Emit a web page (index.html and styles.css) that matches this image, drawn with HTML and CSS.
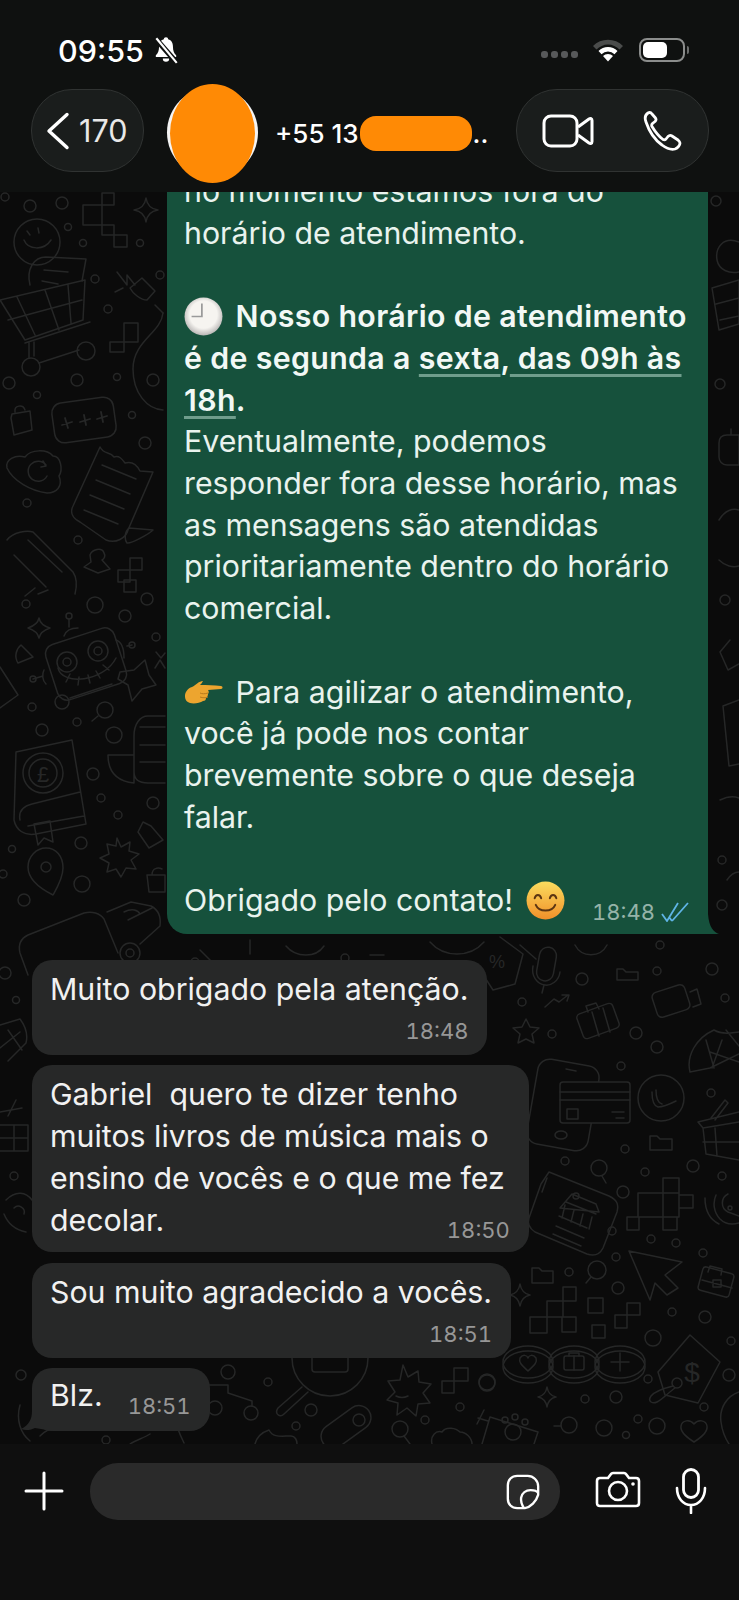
FILE: index.html
```html
<!DOCTYPE html>
<html lang="pt-BR">
<head>
  <meta charset="UTF-8" />
  <title>Conversa</title>
  <link rel="stylesheet" href="styles.css">
</head>
<body>
<div class="phone">

  <header class="topbar">
    <div class="status">
      <div class="status-left">
        <span class="clock">09:55</span>
        <svg class="bell" width="26" height="30" viewBox="0 0 24 28"><path d="M12 2c-1.300 0-2 .9-2 1.900C6.800 4.800 5.500 7.500 5.500 11c0 4-1 6-3 8v1.500h19V19c-2-2-3-4-3-8 0-3.500-1.300-6.200-4.500-7.100C14 2.900 13.300 2 12 2zM9 22a3 3 0 0 0 6 0z" fill="#fff"/><path d="M2 3l20 23" stroke="#0f1110" stroke-width="5"/><path d="M3 3l19 23" stroke="#fff" stroke-width="2"/></svg>
      </div>
      <div class="status-right">
        <div class="signal"><i></i><i></i><i></i><i></i></div>
        <svg width="32" height="24" viewBox="0 0 32 24"><path d="M1 8a21 21 0 0 1 30 0l-3.500 3.500a16 16 0 0 0-23 0z" fill="#4a4c4b"/><path d="M6.500 13a13.500 13.500 0 0 1 19 0l-3 3.200a9 9 0 0 0-13 0z" fill="#fff"/><path d="M11 18a7 7 0 0 1 10 0l-5 5.500z" fill="#fff"/></svg>
        <div class="battery"><div class="battery-fill"></div></div>
        <div class="battery-tip"></div>
      </div>
    </div>
    <div class="nav">
      <div class="pill back-pill">
        <svg width="24" height="38" viewBox="0 0 24 38"><path d="M21 2.500L3 19l18 16.500" fill="none" stroke="#fff" stroke-width="3.400" stroke-linecap="round" stroke-linejoin="round"/></svg>
        <span>170</span>
      </div>
      <div class="avatar"></div>
      <div class="contact">
        <span>+55 13</span>
        <span class="redact"></span>
        <span class="dots">..</span>
      </div>
      <div class="pill call-pill">
        <svg width="52" height="36" viewBox="0 0 52 36"><rect x="2" y="3" width="33" height="30" rx="7" fill="none" stroke="#fff" stroke-width="3"/><path d="M36 14l11-8c1.500-1 3-.5 3 1.500v21c0 2-1.500 2.500-3 1.500l-11-8" fill="none" stroke="#fff" stroke-width="3" stroke-linejoin="round"/></svg>
        <svg width="40" height="42" viewBox="0 0 40 42"><path d="M5 3c-3 2-3.500 5-2 9 3 9 9 18 16 23 4 3 9 5 13 4 3-1 5-4 5-6 0-1-1-2-2-3l-6-4c-1.500-1-3-.5-4 .5l-2 2.500c-1 1-2 1-3 .5-4-3-8-8-11-13-.5-1-.5-2 .5-3l2.500-2c1-1 1.500-2 .5-3.500L9 4C8 2.500 6.500 2 5 3z" fill="none" stroke="#fff" stroke-width="2.800" stroke-linejoin="round"/></svg>
      </div>
    </div>
  </header>

  <main class="chat">
    <svg class="doodles" width="739" height="1252" viewBox="0 192 739 1252" fill="none" stroke="#262727" stroke-width="1.500" stroke-linejoin="round" stroke-linecap="round">
      <!-- left column, top -->
      <circle cx="5" cy="197" r="4"/><circle cx="30" cy="206" r="6"/><circle cx="62" cy="203" r="6"/><circle cx="68" cy="227" r="3.500"/><circle cx="83" cy="243" r="3.500"/><circle cx="140" cy="243" r="3.500"/>
      <path d="M83 205h19v20H83zM102 193h12v12h-12zM102 225h12v10h-12zM114 235h13v12h-13z"/>
      <path d="M146 198c1 7 5 11 12 12c-7 1-11 5-12 12c-1-7-5-11-12-12c7-1 11-5 12-12z"/>
      <circle cx="37" cy="242" r="23"/><path d="M24 240c4 10 20 11 27 0M27 231l3 4M38 228l1 5"/>
      <path d="M30 285c-4-16 4-28 16-28l40 2-4 22M44 270l24 2M42 281l16 3"/>
      <path d="M0 300l85-20-2 40-58 20zM17 297l18 38M45 290l14 40M68 285l3 38M8 320l74-20M90 322l-65 21M29 343v15M34 342v14M39 363l40-13"/>
      <circle cx="31" cy="367" r="9"/><circle cx="86" cy="351" r="9"/>
      <path d="M117 272l10 13 0-10 8 10M115 292l8-4M130 288l12-10 13 13-8 9c-6 0-14-6-17-12zM155 305l8 8"/>
      <circle cx="95" cy="279" r="4"/><circle cx="108" cy="309" r="4"/><circle cx="160" cy="275" r="4"/>
      <path d="M124 323h14v19h-14zM110 342h14v10h-14z"/>
      <path d="M163 313c-2 20-30 28-30 56c0 24 14 40 30 41"/><circle cx="153" cy="380" r="6"/>
      <circle cx="9" cy="383" r="6"/><circle cx="77" cy="380" r="6"/><circle cx="37" cy="395" r="3.500"/><circle cx="117" cy="377" r="3.500"/><circle cx="132" cy="415" r="3.500"/><circle cx="145" cy="443" r="6"/>
      <path d="M12 414l18-3 2 19-18 5-3-17zM15 412c-1-7 8-8 10-2"/>
      <rect x="53" y="400" width="62" height="40" rx="10" transform="rotate(-8 84 420)"/>
      <path d="M62 425l10-3M65 418l3 10M80 422l10-3M84 415l2 10M97 419l10-3M101 412l2 10" stroke-width="1.800"/>
      <path d="M7 468c-2-8 8-14 18-11c6-8 22-8 28-1c8 0 10 14 6 20c4 10-2 17-12 17c-16-2-34-12-40-25z"/><path d="M46 465a10 10 0 1 0 1 11M43 461l3 5-5 1"/>
      <path d="M100 447c4 8 10 4 14 10c5-2 8 2 11 6c7-2 12 2 15 8l13 1-25 58c-2 8-12 14-22 10L80 522c-8-4-10-10-7-16z"/><path d="M153 530c-4 4-22 14-26 13c-3-4-2-12 2-15zM102 465l34 14M96 480l34 14M90 495l34 14M84 510l34 14"/>
      <circle cx="27" cy="503" r="4"/><circle cx="78" cy="540" r="4"/>
      <path d="M7 540c6-8 20-10 26-8l40 40c4 6 4 14 2 22M14 555l32 32M28 540l34 32"/>
      <path d="M90 555c2-6 12-8 14-2c2 3 0 6-2 7l8 9-12 4-14-6 7-5z"/>
      <path d="M130 558h12v12h-12zM118 570h12v12h-12z"/>
      <!-- left column, middle -->
      <path d="M35 588l-10 8M48 590l-10 4"/><circle cx="26" cy="604" r="4"/><circle cx="95" cy="605" r="8"/><circle cx="125" cy="616" r="6"/><circle cx="147" cy="599" r="6"/><circle cx="156" cy="637" r="4"/><path d="M124 580h12v12h-12z"/>
      <path d="M39 618c1 5 4 8 11 10c-6 2-10 5-11 10c-1-5-5-8-11-10c6-2 10-5 11-10z"/>
      <path d="M21 645l12 12-15 6c-4-6-2-14 3-18z"/>
      <rect x="50" y="635" width="72" height="58" rx="10" transform="rotate(-18 86 664)"/>
      <circle cx="67" cy="662" r="10"/><circle cx="67" cy="662" r="4"/><circle cx="98" cy="651" r="10"/><circle cx="98" cy="651" r="4"/>
      <path d="M58 668c4 18 46 14 58-10M66 682l4-8M78 685l1-8M90 683l-2-8M100 678l-4-7M109 670l-6-5"/>
      <circle cx="69" cy="616" r="3"/><path d="M69 619v8M64 636c2-6 8-8 14-8M116 640c6 2 8 10 8 18M127 646l5-1"/><circle cx="132" cy="645" r="3"/><path d="M44 670c-2 4-2 10 2 14M33 679l10-3"/><circle cx="33" cy="679" r="3"/>
      <circle cx="62" cy="702" r="7"/><path d="M70 698l42-14"/>
      <path d="M120 672l14-2 11-10 4 15 7 10-14 4-10 12-4-16-10-6z"/>
      <path d="M156 652l5 6 4-5M155 668l5-8 5 8"/>
      <path d="M0 667l18 28-18 13"/>
      <circle cx="32" cy="707" r="4"/><circle cx="42" cy="730" r="6"/><circle cx="77" cy="722" r="4"/><circle cx="105" cy="710" r="8"/><path d="M98 716l-6 5"/><circle cx="114" cy="735" r="8"/>
      <path d="M165 716h-17c-8 0-14 8-14 20v36c0 8 6 11 14 11h17M108 755h26v28M108 755c0 14 6 26 26 28M140 727h25M140 745h25M140 762h25"/>
      <path d="M16 752l56-12 14 84-50 10c-12 2-20-4-22-14zM20 820c-2-10 4-14 12-16l48-12M28 826l56-10"/><path d="M34 824l16-3 3 21-9-4-6 7z"/>
      <circle cx="43" cy="773" r="20"/><circle cx="43" cy="773" r="14"/><text x="43" y="782" font-family="Liberation Sans" font-size="22" text-anchor="middle" fill="#262727" stroke="none">£</text>
      <circle cx="93" cy="774" r="6"/><circle cx="101" cy="798" r="4"/><circle cx="118" cy="815" r="4"/><circle cx="153" cy="803" r="6"/><circle cx="81" cy="843" r="6"/><circle cx="12" cy="849" r="3.500"/><circle cx="3" cy="874" r="4"/><circle cx="24" cy="900" r="6"/><circle cx="82" cy="884" r="8"/>
      <path d="M46 848c10 0 17 8 17 20c0 10-6 20-10 27c-8-4-25-14-25-28c0-10 8-19 18-19z"/><circle cx="46" cy="867" r="5"/>
      <path d="M117 838l4 9 9-5-1 9 10 3-8 6 5 9-10-1-5 9-5-8-9 3 2-9-9-5 9-4-2-10 9 2z"/>
      <path d="M138 832l5-10 8 4 12 14-14 8z"/><path d="M147 875h18v17h-16zM152 875c0-7 6-8 10-6"/>
      <path d="M28 935l56-22c8-2 16 0 20 6l14 34M28 935c-8 4-10 10-8 18l8 22"/>
      <path d="M107 912l24-10 20 4c8 4 10 12 9 20l-20 18M124 912c8-4 14-2 16 2M128 920l24-12"/><circle cx="130" cy="953" r="10"/><circle cx="130" cy="953" r="4"/>
      <circle cx="5" cy="973" r="6"/><circle cx="16" cy="1000" r="3.500"/>
      <path d="M0 1025l20-6c6 8 8 16 6 24l-18 18M8 1030l14 20M0 1048l20-16"/>
      <path d="M0 1112l22-4M16 1100l-8 16M0 1125h28v26H0M14 1125v26M0 1138h28"/><circle cx="14" cy="1176" r="4"/>
      <path d="M6 1200c10-10 20-8 26 0M4 1214c4 10 12 16 22 18M14 1208a6 6 0 0 1 10 6"/>
      <!-- above the first received message -->
      <path d="M200 950l18 18M250 940v14M286 946c10 12 30 12 38 0M370 955h14M430 942c14 16 40 16 54 0M520 945l16 14M575 945a18 18 0 0 0 32 0"/><circle cx="195" cy="962" r="4"/><circle cx="345" cy="958" r="4"/><circle cx="660" cy="945" r="4"/>
      <!-- right edge beside the green bubble -->
      <circle cx="716" cy="201" r="5"/><path d="M739 242c-16-6-24 6-22 18c2 10 12 14 22 12"/><path d="M712 288l27-8v44l-20 6zM716 304l23-6M720 320l19-4"/>
      <circle cx="720" cy="384" r="5"/><path d="M727 435h12v30h-12c-5 0-8-4-8-8v-14c0-5 3-8 8-8zM731 435v-6"/>
      <path d="M719 520c6-10 14-12 20-10M719 560c6 6 14 8 20 6M730 640l-10 12 8 18 11-6"/><circle cx="725" cy="600" r="5"/>
      <path d="M739 700l-16 6 6 60 10-2M720 800c8-4 14-4 19-2"/><circle cx="722" cy="860" r="4"/><path d="M727 880c4-6 8-8 12-8"/><circle cx="722" cy="905" r="5"/>
      <!-- right of the received messages -->
      <path d="M500 937l23 17-8 30-22 6-13-20"/><text x="497" y="968" font-family="Liberation Sans" font-size="18" text-anchor="middle" fill="#262727" stroke="none">%</text>
      <rect x="538" y="947" width="17" height="34" rx="8.500" transform="rotate(10 546 964)"/><path d="M533 966c-2 10 4 18 12 19 6 1 14-4 15-13M544 985l-2 8"/>
      <circle cx="582" cy="979" r="6"/><circle cx="522" cy="1002" r="4"/><path d="M617 969h6l3 3h12v8h-21z"/><circle cx="657" cy="971" r="4"/><circle cx="712" cy="969" r="6"/>
      <rect x="654" y="988" width="34" height="26" rx="5" transform="rotate(-18 671 1001)"/><path d="M690 992l7-3 4 15-8 3"/><circle cx="725" cy="998" r="4"/>
      <path d="M545 1007l9-8 5 3 9-7M562 995h7l-2 6"/>
      <path d="M526 1019l4 8 9 1-7 6 2 9-8-4-8 4 2-9-7-6 9-1z"/><circle cx="552" cy="1034" r="4"/>
      <rect x="579" y="1008" width="38" height="26" rx="4" transform="rotate(-20 598 1021)"/><path d="M588 1012l-2-6 10-3 3 6M592 1012l7 24M603 1008l7 24"/>
      <circle cx="636" cy="1033" r="6"/><circle cx="657" cy="1047" r="6"/>
      <path d="M690 1072c-4-16 6-34 24-42c10 6 20 2 25 2M690 1072l20-4 29-14M706 1040l8 28M722 1040l-10 28M710 1052l29 10M726 1030l13 16"/>
      <rect x="532" y="1062" width="62" height="86" rx="12" transform="rotate(10 563 1105)"/><path d="M566 1069l10 2"/><ellipse cx="561" cy="1135" rx="6" ry="4"/>
      <rect x="560" y="1082" width="70" height="41" rx="3" fill="#0b0b0b"/><path d="M560 1092h70M560 1100h70M567 1109h11v10h-11zM612 1112h12M616 1118h8"/>
      <circle cx="661" cy="1098" r="23"/><path d="M652 1092c0 8 2 14 6 15 6 0 12-3 18-6M656 1090c0 8 2 13 6 14"/>
      <circle cx="621" cy="1066" r="4"/><circle cx="711" cy="1093" r="4"/>
      <path d="M698 1122l41-10M703 1128l3 26 33 6M698 1122l5 6 36-6M715 1128l2 28M703 1142h36M711 1118l14-18 3 3-13 17"/>
      <path d="M650 1136h7l3 3h12v11h-22z"/><circle cx="625" cy="1149" r="4"/><circle cx="565" cy="1161" r="4"/>
      <circle cx="599" cy="1168" r="8"/><path d="M602 1176l4 7"/><circle cx="645" cy="1172" r="4"/><circle cx="693" cy="1166" r="6"/><circle cx="722" cy="1176" r="4"/>
      <path d="M549 1172l60 24c8 4 10 8 8 16l-14 36c-4 8-10 8-16 6l-52-22c-6-4-8-8-6-14l12-34z"/><path d="M547 1178l-5 14"/>
      <path d="M556 1226l28 12M553 1234l28 12M559 1216l28 12M566 1202l30 12M560 1208l12-14 24 10 3 8zM565 1205l-3 13M574 1210l-3 12M583 1214l-3 12M592 1217l-3 12"/><circle cx="576" cy="1196" r="3"/>
      <circle cx="623" cy="1192" r="6"/><circle cx="612" cy="1231" r="4"/>
      <path d="M663 1178h16v15h-16zM638 1193h25v24h-25zM679 1195h14v13h-14zM663 1193h16v24h-16zM663 1217h14v13h-14zM627 1217h12v13h-12z"/>
      <circle cx="651" cy="1239" r="4"/><circle cx="676" cy="1243" r="4"/><circle cx="703" cy="1253" r="4"/>
      <path d="M705 1198c0 14 6 22 14 26M716 1195a22 22 0 0 0 4 24c6 6 12 6 19 4M728 1194a10 10 0 0 0 0 18l11 4"/><circle cx="730" cy="1208" r="2"/>
      <path d="M629 1251l53 11-17 13 13 13-11 7-12-12-5 17z"/>
      <circle cx="616" cy="1257" r="4"/><circle cx="618" cy="1288" r="6"/><circle cx="672" cy="1312" r="4"/><circle cx="705" cy="1317" r="6"/><circle cx="653" cy="1338" r="8"/><circle cx="731" cy="1341" r="4"/>
      <rect x="700" y="1270" width="32" height="24" rx="3" transform="rotate(15 716 1282)"/><path d="M708 1272l2-6 12 3-1 6M702 1280l30 8M713 1280h8v7h-8z"/>
      <path d="M532 1268h7l3 3h11v12h-21z"/><circle cx="569" cy="1272" r="4"/><circle cx="597" cy="1270" r="9"/><path d="M591 1277l-5 6"/>
      <path d="M520 1284c1 6 5 10 10 11c-5 1-9 5-10 11c-1-6-5-10-10-11c5-1 9-5 10-11z"/>
      <path d="M563 1287h13v14h-13zM547 1301h16v16h-16zM530 1317h17v16h-17zM562 1317h14v15h-14zM563 1301v16M588 1298h15v15h-15zM592 1325h13v13h-13zM627 1303h13v12h-13zM615 1315h12v13h-12z"/>
      <!-- bottom band -->
      <ellipse cx="528" cy="1362" rx="25" ry="16"/><ellipse cx="528" cy="1367" rx="25" ry="16"/><path d="M520 1358c3-4 7-3 8 0c1-3 5-4 8 0c2 5-4 9-8 13c-4-4-10-8-8-13z"/>
      <ellipse cx="574" cy="1362" rx="25" ry="16"/><ellipse cx="574" cy="1367" rx="25" ry="16"/><rect x="564" y="1356" width="20" height="14" rx="2"/><path d="M569 1356v-3h10v3M574 1356v14"/>
      <ellipse cx="620" cy="1362" rx="25" ry="16"/><ellipse cx="620" cy="1367" rx="25" ry="16"/><path d="M620 1353v18M611 1362h18"/>
      <path d="M690 1335l30 27-22 41-33-8-7-23z"/><text x="692" y="1382" font-family="Liberation Sans" font-size="28" text-anchor="middle" fill="#262727" stroke="none">$</text>
      <circle cx="677" cy="1383" r="5"/><path d="M673 1386c-8 2-18 5-22 10-4 6 2 8 6 6 6-3 12-10 18-14"/><circle cx="648" cy="1379" r="4"/>
      <path d="M547 1387c1 6 4 9 9 10c-5 1-8 4-9 10c-1-6-4-9-9-10c5-1 8-4 9-10z"/><circle cx="585" cy="1399" r="4"/><circle cx="616" cy="1397" r="6"/><circle cx="487" cy="1383" r="8"/>
      <circle cx="569" cy="1425" r="8"/><path d="M561 1426h-7"/><circle cx="604" cy="1428" r="8"/><circle cx="638" cy="1419" r="4"/><circle cx="626" cy="1435" r="3.500"/><circle cx="657" cy="1426" r="8"/><circle cx="704" cy="1407" r="4"/><circle cx="729" cy="1375" r="6"/>
      <path d="M694 1442c-8-5-14-10-13-16 1-6 9-7 13-2 4-5 12-4 13 2 1 6-5 11-13 16z"/>
      <path d="M739 1392c-12 4-20 16-18 30 1 8 4 16 8 22"/>
      <path d="M207 1385h21v8l24 8v5"/><circle cx="228" cy="1372" r="7"/><circle cx="215" cy="1408" r="7"/><circle cx="251" cy="1413" r="7"/>
      <circle cx="330" cy="1358" r="38"/><rect x="312" y="1350" width="36" height="22" rx="3"/><path d="M320 1350v-4h20v4"/><path d="M302 1387l-24 21c-4 6 2 10 6 6l24-22"/>
      <circle cx="311" cy="1410" r="6"/><circle cx="296" cy="1426" r="4"/><circle cx="268" cy="1382" r="4"/>
      <rect x="318" y="1415" width="56" height="24" rx="12" transform="rotate(-36 346 1427)"/><circle cx="359" cy="1420" r="6"/>
      <path d="M403 1365l5 12 10-6 1 11 12 2-8 9 7 10-12 1-2 12-9-8-10 7 1-12-11-3 8-8-7-11 12-1z"/><path d="M396 1396c4 2 8 2 12 0"/>
      <path d="M442 1381h12v12h-12zM454 1368h14v13h-14z"/><circle cx="487" cy="1382" r="8"/><circle cx="460" cy="1407" r="4"/><circle cx="425" cy="1420" r="4"/>
      <circle cx="400" cy="1429" r="8"/><path d="M404 1436l6 8"/><path d="M432 1444c-2-8 4-14 10-12 4-6 14-4 18 0 6 0 12 6 12 12"/>
      <path d="M490 1417l48 15-4 12M490 1417l-8 27M484 1410l-7 14M478 1418l10 3"/><circle cx="513" cy="1432" r="8"/><circle cx="505" cy="1420" r="3"/><circle cx="515" cy="1417" r="3"/><circle cx="525" cy="1422" r="3"/>
      <path d="M255 1444c2-8 8-12 14-14 4 8 12 6 22 6 4 0 6 4 6 8"/>
      <circle cx="106" cy="1440" r="4"/><circle cx="21" cy="1375" r="5"/><path d="M20 1405c-4 14 0 28 10 36M40 1436c6-6 10-8 16-8M100 1405l14 20M150 1434c-6 4-14 6-20 10M170 1405c4 14 8 26 14 38"/><circle cx="190" cy="1425" r="4"/>
      <path d="M64 1400c4 10 10 16 14 20"/>
    </svg>

    <div class="messages">
      <div class="bubble out">
        <p>no momento estamos fora do<br>horário de atendimento.</p>
        <p class="gap"><span class="emoji"><svg width="39" height="39" viewBox="0 0 36 36"><defs><radialGradient id="face" cx="0.5" cy="0.45" r="0.6"><stop offset="0.6" stop-color="#f6f4f0"/><stop offset="1" stop-color="#a9a6a6"/></radialGradient></defs><circle cx="18" cy="18" r="17.500" fill="url(#face)"/><path d="M16.500 6v12H7" fill="none" stroke="#9a9a9a" stroke-width="1.600"/></svg></span> <b>Nosso horário de atendimento<br>é de segunda a <u>sexta</u>,<u> das 09h às</u><br><u>18h</u>.</b><br>Eventualmente, podemos<br>responder fora desse horário, mas<br>as mensagens são atendidas<br>prioritariamente dentro do horário<br>comercial.</p>
        <p class="gap"><span class="emoji"><svg width="39" height="39" viewBox="0 0 39 39"><path d="M1 23c0-4 3-8 7-9 4-2 7-6 11-6-1 2-2 3-3 4 7 0 14 0 21 1 2 0 2 3 0 3l-13 1c1 1 1 3 0 4 0 2-1 3-2 4 0 2-1 3-3 3-3 2-9 3-13 2-3-1-5-3-5-7z" fill="#eda52f"/><path d="M24 20c-3 1-6 1-8 0M24 24c-3 1-5 1-8 0" stroke="#b97a1c" fill="none"/></svg></span> Para agilizar o atendimento,<br>você já pode nos contar<br>brevemente sobre o que deseja<br>falar.</p>
        <p class="gap">Obrigado pelo contato! <span class="emoji emoji-smile"><svg width="39" height="39" viewBox="0 0 36 36"><defs><linearGradient id="smile" x1="0" y1="0" x2="0" y2="1"><stop offset="0" stop-color="#fbdc5e"/><stop offset="1" stop-color="#f0902a"/></linearGradient></defs><circle cx="18" cy="18" r="17.500" fill="url(#smile)"/><path d="M8 16c1-4 5-4 6 0M22 16c1-4 5-4 6 0" fill="none" stroke="#5b3512" stroke-width="1.800" stroke-linecap="round"/><path d="M9 22c3 7 15 7 18 0" fill="none" stroke="#5b3512" stroke-width="1.800" stroke-linecap="round"/></svg></span></p>
        <div class="meta">
          <span>18:48</span>
          <svg width="29" height="20" viewBox="0 0 29 20"><path d="M1 12l5 7L17 1M11 19L27 1M8 15l3 4" fill="none" stroke="#5fb4e6" stroke-width="1.800"/></svg>
        </div>
        <svg class="tail tail-out" width="32" height="20" viewBox="0 0 32 20"><path d="M0 20h32c-5-2-10-6-11-20H0z" fill="#16513c"/></svg>
      </div>

      <div class="bubble in first">
        <p>Muito obrigado pela atenção.</p>
        <div class="time-row"><span>18:48</span></div>
      </div>
      <div class="bubble in wide">
        <p>Gabriel &nbsp;quero te dizer tenho<br>muitos livros de música mais o<br>ensino de vocês e o que me fez<br>decolar.</p>
        <div class="time-inline"><span>18:50</span></div>
      </div>
      <div class="bubble in">
        <p>Sou muito agradecido a vocês.</p>
        <div class="time-row"><span>18:51</span></div>
      </div>
      <div class="bubble in last">
        <p>Blz.</p>
        <span class="time-side">18:51</span>
        <svg class="tail tail-in" width="32" height="20" viewBox="0 0 32 20"><path d="M32 0H11c0 8-3 14-11 18 5 2 10 1 14-1l18 3z" fill="#272828"/></svg>
      </div>
    </div>
  </main>

  <footer class="composer">
    <svg class="plus" width="42" height="42" viewBox="0 0 42 42"><path d="M21 3v36M3 21h36" stroke="#fff" stroke-width="3" stroke-linecap="round"/></svg>
    <div class="input">
      <svg width="36" height="36" viewBox="0 0 36 38"><path d="M12 2h11c6 0 11 5 11 11v9c-2 7-8 13-14 14h-8C6 36 2 32 2 26V12C2 6 6 2 12 2z" fill="none" stroke="#fff" stroke-width="2.500"/><path d="M34 20c-2-3-5-3-8-3-5 0-9 3-10 8-.5 4 1 8 3 11" fill="none" stroke="#fff" stroke-width="2.500"/></svg>
    </div>
    <svg class="cam" width="46" height="38" viewBox="0 0 46 38"><path d="M5 7h8l3-4c.5-.8 1.500-1 2-1h11c1 0 1.500.2 2 1l3 4h7c2 0 3 1 3 3v22c0 2-1 3-3 3H5c-2 0-3-1-3-3V10c0-2 1-3 3-3z" fill="none" stroke="#fff" stroke-width="2.600"/><circle cx="23" cy="20" r="9" fill="none" stroke="#fff" stroke-width="2.600"/><circle cx="38" cy="13" r="1.800" fill="#fff"/></svg>
    <svg class="mic" width="32" height="46" viewBox="0 0 32 46"><rect x="8.500" y="1.500" width="15" height="28" rx="7.500" fill="none" stroke="#fff" stroke-width="2.800"/><path d="M2 20c0 10 6 17 14 17s14-7 14-17M16 37v8" fill="none" stroke="#fff" stroke-width="2.600" stroke-linecap="round"/></svg>
  </footer>

</div>
</body>
</html>
```

FILE: styles.css
```css
* {
  box-sizing: border-box;
}

body {
  margin: 0;
  background-color: #0f0f0f;
  font-family: Inter, "Liberation Sans", sans-serif;
  color: #fff;
}

.phone {
  width: 739px;
  height: 1600px;
  display: flex;
  flex-direction: column;
  overflow: hidden;
}

/* top area */
.topbar {
  height: 192px;
  flex-shrink: 0;
  background-color: #0f1110;
  padding: 32px 30px 0 31px;
  position: relative;
  z-index: 2;
}

.status {
  height: 36px;
  display: flex;
  justify-content: space-between;
  align-items: center;
  padding: 0 20px 0 27px;
}

.status-left {
  display: flex;
  align-items: center;
  gap: 9px;
}

.clock {
  font-size: 30.500px;
  font-weight: 500;
}

.status-right {
  display: flex;
  align-items: center;
}

.signal {
  display: flex;
  gap: 3px;
  margin: 8px 14px 0 0;
}

.signal i {
  width: 7px;
  height: 7px;
  border-radius: 3px;
  background-color: #57595a;
}

.battery {
  width: 46px;
  height: 24px;
  margin-left: 15px;
  padding: 2px;
  border: 2px solid #8b8d8c;
  border-radius: 8px;
}

.battery-fill {
  width: 24px;
  height: 100%;
  background-color: #fff;
  border-radius: 5px;
}

.battery-tip {
  width: 2px;
  height: 8px;
  margin-left: 2px;
  background-color: #6c6e6d;
  border-radius: 0 2px 2px 0;
}

.nav {
  height: 83px;
  margin-top: 21px;
  display: flex;
  align-items: center;
}

.pill {
  height: 83px;
  display: flex;
  align-items: center;
  flex-shrink: 0;
  background-color: #1a1d1c;
  border: 1.500px solid #303332;
  border-radius: 41px;
}

.back-pill {
  width: 113px;
  padding-left: 14px;
  gap: 9px;
  font-size: 30.500px;
  color: #e8e8e8;
}

.avatar {
  width: 91px;
  height: 91px;
  margin: 3px 0 0 23px;
  flex-shrink: 0;
  position: relative;
  background-color: #f4f4f4;
  border-radius: 50%;
}

/* orange scribble over the photo */
.avatar::after {
  content: "";
  position: absolute;
  left: 3px;
  top: -3px;
  width: 85px;
  height: 99px;
  background-color: #ff8a05;
  border-radius: 50%;
}

.contact {
  display: flex;
  align-items: center;
  margin: 5px 0 0 17px;
  flex: 1;
  font-size: 26px;
  font-weight: 500;
  white-space: nowrap;
}

.redact {
  width: 112px;
  height: 35px;
  margin: 0 1px;
  background-color: #ff8a05;
  border-radius: 16px;
}

.call-pill {
  width: 193px;
  padding-left: 25px;
  gap: 49px;
}

/* chat */
.chat {
  flex: 1;
  position: relative;
  background-color: #0b0b0b;
  overflow: hidden;
}

.doodles {
  position: absolute;
  left: 0;
  top: 0;
}

.messages {
  position: absolute;
  left: 0;
  right: 0;
  bottom: 13px;
  display: flex;
  flex-direction: column;
  align-items: flex-start;
  gap: 10.500px;
  padding: 0 31px 0 32px;
  font-size: 30.300px;
  line-height: 41.700px;
}

.messages p {
  margin: 0;
}

.bubble {
  position: relative;
  border-radius: 20px;
}

.bubble .gap {
  margin-top: 41.700px;
}

.bubble.out {
  align-self: flex-end;
  width: 541px;
  background-color: #16513c;
  color: #e9f3ee;
  padding: 40px 17px 12px 17px;
  margin-bottom: 16px;
}

.bubble.out b {
  font-weight: 600;
  letter-spacing: 0.350px;
  color: #f2f8f5;
}

.bubble.out u {
  text-decoration-color: #6f9d8c;
  text-underline-offset: 5px;
  text-decoration-thickness: 3px;
}

.emoji {
  display: inline-block;
  height: 39px;
  vertical-align: -9px;
  margin-right: 4px;
}

.emoji-smile {
  margin-left: 5px;
}

.meta {
  position: absolute;
  right: 18px;
  bottom: 7px;
  display: flex;
  align-items: center;
  gap: 6px;
  font-size: 22px;
  line-height: 30px;
  color: #95b3a8;
  font-variant-numeric: tabular-nums;
}

.tail {
  position: absolute;
  bottom: 0;
}

.tail-out {
  right: -11px;
}

.tail-in {
  left: -11px;
}

.bubble.in {
  background-color: #272828;
  color: #f1f1f1;
  padding: 9px 19px 9px 18px;
}

.bubble.wide {
  padding: 9px 24px 11px 18px;
}

.time-row {
  display: flex;
  justify-content: flex-end;
  margin-top: 5px;
  font-size: 22px;
  line-height: 30px;
  color: #979797;
  font-variant-numeric: tabular-nums;
}

.time-inline {
  position: absolute;
  right: 19px;
  bottom: 7px;
  font-size: 22px;
  line-height: 30px;
  color: #979797;
  font-variant-numeric: tabular-nums;
}

.bubble.in.last {
  display: flex;
  height: 63px;
  padding: 7px 19px 0 18px;
  gap: 25px;
}

.time-side {
  font-size: 22px;
  line-height: 30px;
  color: #979797;
  font-variant-numeric: tabular-nums;
  margin-top: 16px;
}

/* bottom bar */
.composer {
  height: 156px;
  flex-shrink: 0;
  background-color: #0f0f0f;
  display: flex;
  align-items: flex-start;
  padding: 19px 0 0 23px;
  position: relative;
}

.plus {
  margin-top: 7px;
}

.input {
  width: 470px;
  height: 57px;
  margin-left: 25px;
  background-color: #2a2a2a;
  border-radius: 28px;
  display: flex;
  align-items: center;
  justify-content: flex-end;
  padding-right: 19px;
}

.cam {
  margin: 8px 0 0 35px;
}

.mic {
  margin: 5px 0 0 34px;
}
```
